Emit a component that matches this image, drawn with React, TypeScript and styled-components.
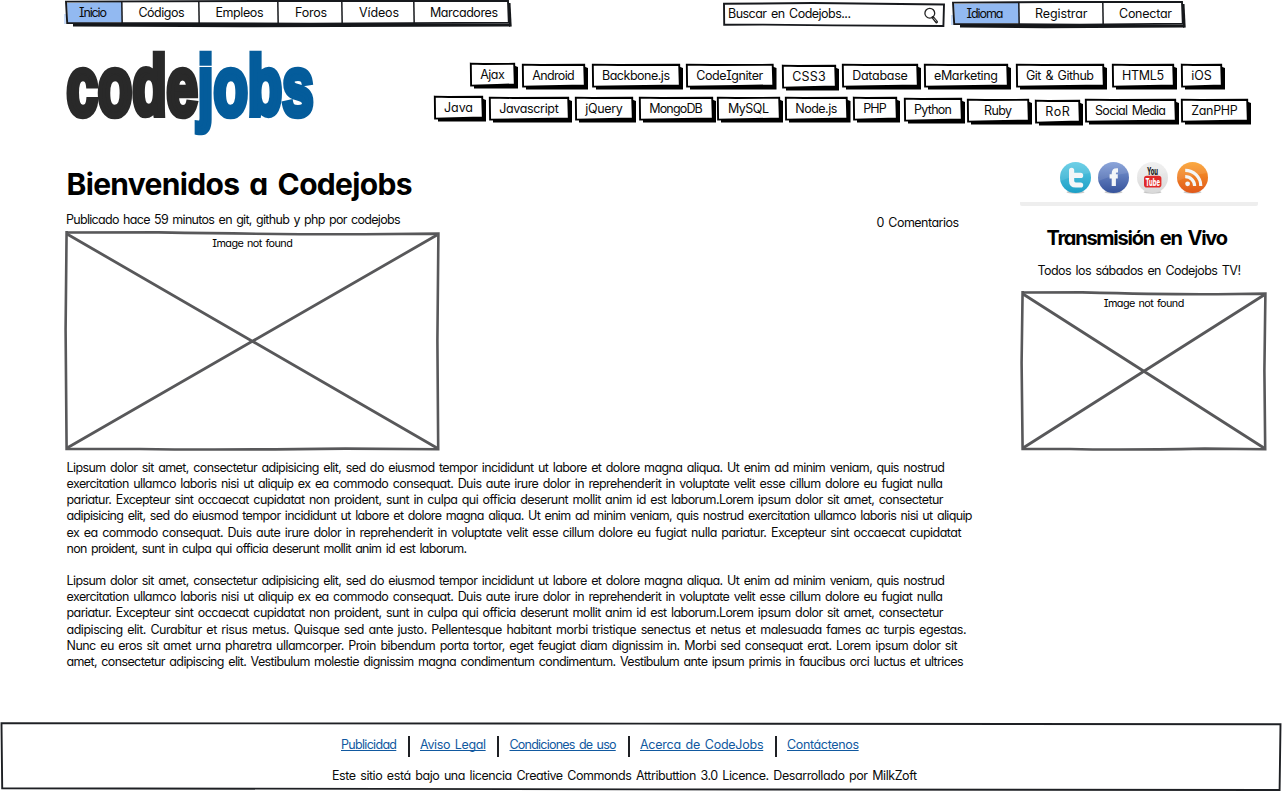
import React, { useLayoutEffect, useRef, useState } from "react";
import styled, { createGlobalStyle } from "styled-components";

const GlobalStyle = createGlobalStyle`
  * { box-sizing: border-box; }
  body {
    margin: 0;
    background: #fff;
    color: #0a0a0a;
    font-family: Inter, "Liberation Sans", sans-serif;
    font-feature-settings: "cv11", "cv08";
    font-size: 12.5px;
    line-height: 16px;
    overflow: hidden;
  }
  h1, h2, p { margin: 0; }
`;

const FitBox = styled.span<{ $w: number }>`
  display: inline-block;
  flex: none;
  width: ${(p) => p.$w}px;
  white-space: pre;
  word-spacing: 0.12em;
`;

/* One line of text, tracked so that it fills the given measure. */
function Fit({ w, children }: { w: number; children: string }) {
  const ref = useRef<HTMLSpanElement>(null);
  const [tracking, setTracking] = useState(0);
  useLayoutEffect(() => {
    if (!ref.current) return;
    const natural = ref.current.getBoundingClientRect().width;
    setTracking((w - natural) / (children.length - 1));
  }, [w, children]);
  return (
    <FitBox $w={w}>
      <span ref={ref} style={{ letterSpacing: tracking }}>{children}</span>
    </FitBox>
  );
}

const Page = styled.div`
  width: 1282px;
  height: 791px;
  display: flex;
  flex-direction: column;
  overflow: hidden;
`;

const Sketch = styled.svg`
  position: absolute;
  left: 0;
  top: 0;
  overflow: visible;
  pointer-events: none;
`;

/* ---------- top bar ---------- */

const TopBar = styled.div`
  display: flex;
  align-items: flex-start;
  height: 51px;
  padding-left: 65px;
`;

const MenuBox = styled.nav<{ $w: number; $ml?: number; $mt?: number }>`
  position: relative;
  display: flex;
  flex: none;
  width: ${(p) => p.$w}px;
  height: 28px;
  margin-left: ${(p) => p.$ml ?? 0}px;
  margin-top: ${(p) => p.$mt ?? 0}px;
`;

const MenuItem = styled.a<{ $w: number; $pad: number }>`
  position: relative;
  flex: none;
  width: ${(p) => p.$w}px;
  padding: 5px 0 0 ${(p) => p.$pad}px;
`;

type Item = { label: string; w: number; pad: number; text: number };

function Menu({ items, ml, mt }: { items: Item[]; ml?: number; mt?: number }) {
  const total = items.reduce((s, i) => s + i.w, 0);
  const edges: number[] = [];
  items.reduce((s, i) => { edges.push(s + i.w); return s + i.w; }, 0);
  const first = items[0].w;
  return (
    <MenuBox $w={total} $ml={ml} $mt={mt}>
      <Sketch width={total + 4} height={28}>
        <path d={`M2 3 L${first} 2 V22 L3 23Z`} fill="#92b9f1" />
        <path d="M0 14V24" stroke="#92b9f1" strokeWidth="1" />
        <path d={`M8 25 L${total * 0.4} 25.6 L${total} 25`} stroke="#15171a" strokeWidth="3.2" fill="none" />
        <path d={`M${total - 0.8} 3 L${total + 0.4} 26.6`} stroke="#15171a" strokeWidth="2.6" fill="none" />
        <path
          d={`M1 1.6 L${total * 0.45} 1 L${total - 2} 1 L${total - 1.2} 22.6 L${total * 0.55} 23.6 L2.2 23 Z`}
          stroke="#17191d" strokeWidth="1.9" fill="none"
        />
        {edges.slice(0, -1).map((x) => (
          <path key={x} d={`M${x - 0.2} 1 L${x + 0.2} 26`} stroke="#17191d" strokeWidth="1.5" />
        ))}
      </Sketch>
      {items.map((i) => (
        <MenuItem key={i.label} $w={i.w} $pad={i.pad}><Fit w={i.text}>{i.label}</Fit></MenuItem>
      ))}
    </MenuBox>
  );
}

const SearchBox = styled.div`
  position: relative;
  display: flex;
  justify-content: space-between;
  flex: none;
  width: 222px;
  height: 24px;
  margin: 3px 0 0 213px;
  padding: 3px 6px 0 5px;
`;

const SearchText = styled.span`
  position: relative;
`;

const Lens = styled.svg`
  position: relative;
  flex: none;
  margin-top: 1px;
`;

/* ---------- header ---------- */

const Header = styled.header`
  display: flex;
  height: 110px;
  padding-left: 65px;
`;

const Logo = styled.svg`
  flex: none;
  width: 250px;
  height: 78px;
  overflow: visible;
  font-family: "Liberation Sans", Arial, sans-serif;
  font-feature-settings: normal;
  font-size: 84px;
  font-weight: 700;
`;

const TagCloud = styled.div`
  display: grid;
  grid-template-rows: 33px 33px;
  width: 900px;
  margin: 12px 0 0 119px;
  align-items: start;
`;

const TagRow = styled.div<{ $pad: number }>`
  display: flex;
  align-items: flex-start;
  padding-left: ${(p) => p.$pad}px;
`;

const TagBox = styled.a<{ $w: number; $gap: number; $drop: number }>`
  position: relative;
  display: flex;
  flex: none;
  justify-content: center;
  width: ${(p) => p.$w}px;
  height: 25px;
  margin-left: ${(p) => p.$gap}px;
  margin-top: ${(p) => p.$drop}px;
  padding: 4px 3px 0 0;
`;

const TagText = styled.span`
  position: relative;
`;

type TagData = [label: string, left: number, right: number, top: number, text: number];

const row1: TagData[] = [
  ["Ajax", 470, 518, 0, 24.5], ["Android", 522, 588, 1, 42.5], ["Backbone.js", 592, 683, 1, 68],
  ["CodeIgniter", 686, 776.5, 1, 67], ["CSS3", 782, 839, 2, 33.5], ["Database", 842, 921, 1, 55.5],
  ["eMarketing", 924, 1011, 1, 64], ["Git & Github", 1016, 1107, 1, 68], ["HTML5", 1112, 1177, 1, 42],
  ["iOS", 1181, 1225, 1, 20.5],
];
const row2: TagData[] = [
  ["Java", 434, 486, 0, 29], ["Javascript", 489, 572, 1, 59.5], ["jQuery", 575, 636, 1, 37.5],
  ["MongoDB", 639, 716, 1, 53.5], ["MySQL", 717, 783, 1, 41], ["Node.js", 785, 850.5, 1, 42],
  ["PHP", 853, 900, 1, 23.5], ["Python", 904, 965, 2, 38], ["Ruby", 967, 1032, 3, 28],
  ["RoR", 1035, 1083, 4, 24.5], ["Social Media", 1085, 1179, 3, 71], ["ZanPHP", 1181, 1251, 3, 46.5],
];

function Tag({ label, w, gap, drop, text }: { label: string; w: number; gap: number; drop: number; text: number }) {
  const r = w - 3;
  return (
    <TagBox $w={w} $gap={gap} $drop={drop}>
      <Sketch width={w} height={26}>
        <path d={`M4 22 V25.6 L${w * 0.5} 25.4 L${w} 25.4 L${w} 4 L${r - 1} 2.6 V22Z`} fill="#000" />
        <path
          d={`M0.8 0.6 L${r * 0.3} 1 L${r - 0.8} 0.8 L${r - 0.2} 21.4 L${r * 0.6} 22 L1.1 22.6 Z`}
          fill="#fff" stroke="#000" strokeWidth="1.9"
        />
      </Sketch>
      <TagText><Fit w={text}>{label}</Fit></TagText>
    </TagBox>
  );
}

function Tags({ data, origin }: { data: TagData[]; origin: number }) {
  return (
    <TagRow $pad={data[0][1] - origin}>
      {data.map(([label, left, right, top, text], i) => (
        <Tag key={label} label={label} w={right - left} gap={i ? left - data[i - 1][2] : 0} drop={top} text={text} />
      ))}
    </TagRow>
  );
}

/* ---------- content ---------- */

const Columns = styled.main`
  display: flex;
  height: 561px;
  padding-left: 66px;
`;

const Article = styled.article`
  flex: none;
  width: 954px;
`;

const Title = styled.h1`
  height: 46px;
  padding: 5px 0 0 0.5px;
  color: #000;
  font-size: 30px;
  line-height: 36px;
  font-weight: 700;
`;

const Meta = styled.div`
  display: flex;
  justify-content: space-between;
  width: 893px;
  height: 24px;
  padding-top: 5px;
`;

const Comments = styled.span`
  margin-top: 3px;
`;

const Picture = styled.figure<{ $w: number; $h: number }>`
  position: relative;
  display: flex;
  justify-content: center;
  width: ${(p) => p.$w}px;
  height: ${(p) => p.$h}px;
  margin: 0 0 0 -1px;
  padding: 5px 0 0 1px;
  font-size: 10.8px;
  line-height: 16px;
  color: #000;
`;

const Caption = styled.figcaption`
  position: relative;
`;

function MissingImage({ w, h }: { w: number; h: number }) {
  return (
    <Picture $w={w} $h={h}>
      <Sketch width={w} height={h} fill="none" stroke="#58585a" strokeWidth="2.8">
        <path d={`M1 1.5 L${w * 0.25} 1.4 Q${w * 0.6} 3.6 ${w * 0.8} 3.2 L${w - 0.6} 2.6 L${w - 1.6} ${h * 0.5} L${w - 0.8} ${h - 0.8} L${w * 0.75} ${h - 1.4} Q${w * 0.4} ${h + 0.2} ${w * 0.2} ${h - 1} L1.6 ${h - 1} L0.6 ${h * 0.45} L1.6 0`} strokeWidth="2.6" />
        <path d={`M2 3 L${w - 2} ${h - 2} M${w - 2} 4 L2 ${h - 2}`} />
      </Sketch>
      <Caption><Fit w={80.5}>Image not found</Fit></Caption>
    </Picture>
  );
}

const Prose = styled.div`
  display: grid;
  gap: 16.17px;
  padding: 10px 0 0 0.5px;
  line-height: 16.17px;
`;

const Line = styled.span`
  display: block;
  height: 16.17px;
`;

const paragraphs: [string, number][][] = [
  [
    ["Lipsum dolor sit amet, consectetur adipisicing elit, sed do eiusmod tempor incididunt ut labore et dolore magna aliqua. Ut enim ad minim veniam, quis nostrud", 878.5],
    ["exercitation ullamco laboris nisi ut aliquip ex ea commodo consequat. Duis aute irure dolor in reprehenderit in voluptate velit esse cillum dolore eu fugiat nulla", 876.5],
    ["pariatur. Excepteur sint occaecat cupidatat non proident, sunt in culpa qui officia deserunt mollit anim id est laborum.Lorem ipsum dolor sit amet, consectetur", 877],
    ["adipisicing elit, sed do eiusmod tempor incididunt ut labore et dolore magna aliqua. Ut enim ad minim veniam, quis nostrud exercitation ullamco laboris nisi ut aliquip", 906],
    ["ex ea commodo consequat. Duis aute irure dolor in reprehenderit in voluptate velit esse cillum dolore eu fugiat nulla pariatur. Excepteur sint occaecat cupidatat", 895],
    ["non proident, sunt in culpa qui officia deserunt mollit anim id est laborum.", 400.5],
  ],
  [
    ["Lipsum dolor sit amet, consectetur adipisicing elit, sed do eiusmod tempor incididunt ut labore et dolore magna aliqua. Ut enim ad minim veniam, quis nostrud", 878.5],
    ["exercitation ullamco laboris nisi ut aliquip ex ea commodo consequat. Duis aute irure dolor in reprehenderit in voluptate velit esse cillum dolore eu fugiat nulla", 876.5],
    ["pariatur. Excepteur sint occaecat cupidatat non proident, sunt in culpa qui officia deserunt mollit anim id est laborum.Lorem ipsum dolor sit amet, consectetur", 877],
    ["adipiscing elit. Curabitur et risus metus. Quisque sed ante justo. Pellentesque habitant morbi tristique senectus et netus et malesuada fames ac turpis egestas.", 900],
    ["Nunc eu eros sit amet urna pharetra ullamcorper. Proin bibendum porta tortor, eget feugiat diam dignissim in. Morbi sed consequat erat. Lorem ipsum dolor sit", 891],
    ["amet, consectetur adipiscing elit. Vestibulum molestie dignissim magna condimentum condimentum. Vestibulum ante ipsum primis in faucibus orci luctus et ultrices", 897],
  ],
];

const Aside = styled.aside`
  flex: none;
  width: 247px;
`;

const Social = styled.div`
  display: flex;
  height: 45px;
  padding-left: 38px;
  border-bottom: 4px solid #eee;
  width: 238px;
  border-radius: 2px;
`;

const AsideTitle = styled.h2`
  padding: 20px 0 0 26.5px;
  color: #000;
  font-size: 20px;
  line-height: 24px;
`;

const AsideText = styled.p`
  height: 41px;
  padding: 13px 0 0 17.5px;
`;

const AsidePicture = styled.div`
  padding-left: 2px;
`;

function SocialIcons() {
  return (
    <Social>
      <svg width="160" height="38" viewBox="0 0 160 38">
        <defs>
          <linearGradient id="tw" x2="0" y2="1"><stop offset="0" stopColor="#5ecbe4" /><stop offset="1" stopColor="#1c9fc6" /></linearGradient>
          <linearGradient id="fb" x2="0" y2="1"><stop offset="0" stopColor="#7f9bd6" /><stop offset="1" stopColor="#36539b" /></linearGradient>
          <linearGradient id="yt" x2="0" y2="1"><stop offset="0" stopColor="#f0f0f0" /><stop offset="1" stopColor="#d9d9d9" /></linearGradient>
          <linearGradient id="rs" x2="0" y2="1"><stop offset="0" stopColor="#fba02c" /><stop offset="1" stopColor="#e0581a" /></linearGradient>
        </defs>
        {[17.5, 55.5, 94.5, 134.5].map((x, i) => (
          <g key={x}>
            <ellipse cx={x} cy="31.2" rx="9" ry="1.6" fill="#000" opacity=".22" />
            <circle cx={x} cy="16.5" r="15.5" fill={`url(#${["tw", "fb", "yt", "rs"][i]})`} />
            <path d={`M${x - 15} 20 A15.5 15.5 0 1 1 ${x + 15} 12 Q${x + 2} 13 ${x - 15} 20`} fill="#fff" opacity=".1" />
          </g>
        ))}
        <g fill="none" stroke="#f3f6f8" strokeLinecap="round" strokeLinejoin="round">
          <path d="M13.6 9.3V19.8Q13.6 24 17.8 24H22.6M13.6 14.4H22.6" strokeWidth="5.2" />
          <path d="M60 9.3H58.6Q55.8 9.3 55.8 12.5V25M51.6 15.4H59.8" strokeWidth="4.2" strokeLinecap="butt" />
          <path d="M127.2 15.6A9.4 9.4 0 0 1 136.6 25M127.2 9.4A15.6 15.6 0 0 1 142.8 25" strokeWidth="3.2" strokeLinecap="butt" />
        </g>
        <circle cx="129.6" cy="22.8" r="2.4" fill="#f3f6f8" />
        <text x="89" y="14" fontSize="10" fontWeight="800" fill="#222" textLength="11" lengthAdjust="spacingAndGlyphs">You</text>
        <rect x="86" y="14.8" width="17.4" height="11.8" rx="2.8" fill="#e02a2a" />
        <text x="87.6" y="24.6" fontSize="10.5" fontWeight="800" fill="#fff" textLength="14.4" lengthAdjust="spacingAndGlyphs">Tube</text>
      </svg>
    </Social>
  );
}

/* ---------- footer ---------- */

const Footer = styled.footer`
  position: relative;
  flex: none;
  width: 1282px;
  height: 69px;
`;

const FooterLinks = styled.div`
  display: flex;
  height: 46px;
  padding: 14px 0 0 341px;
`;

const FooterLink = styled.a`
  flex: none;
  padding-top: 1px;
  color: #1159a0;

  & span span {
    text-decoration: underline;
    text-decoration-thickness: 1px;
    text-underline-offset: 1px;
    text-decoration-skip-ink: none;
  }
`;

const Divider = styled.i<{ $l: number; $r: number }>`
  flex: none;
  width: 2px;
  height: 21px;
  margin: 0 ${(p) => p.$r}px 0 ${(p) => p.$l}px;
  background: #1e2024;
`;

const Legal = styled.p`
  padding-left: 332px;
`;

export default function App() {
  return (
    <Page>
      <GlobalStyle />
      <TopBar>
        <Menu
          items={[
            { label: "Inicio", w: 57, pad: 14, text: 28 },
            { label: "Códigos", w: 77, pad: 16.5, text: 46 },
            { label: "Empleos", w: 79, pad: 16.5, text: 48 },
            { label: "Foros", w: 64, pad: 17, text: 32 },
            { label: "Vídeos", w: 72, pad: 17, text: 40 },
            { label: "Marcadores", w: 96, pad: 16, text: 68 },
          ]}
        />
        <SearchBox>
          <Sketch width={222} height={24}>
            <path d="M1 0.8 L90 0 L221 1.5 L220.4 23 L110 22.4 L40 21.6 L1.2 21.8 Z" fill="none" stroke="#17191d" strokeWidth="1.9" />
          </Sketch>
          <SearchText><Fit w={123}>Buscar en Codejobs...</Fit></SearchText>
          <Lens width="15" height="17" viewBox="0 0 15 17">
            <circle cx="5.8" cy="6.2" r="4.9" fill="#fff" stroke="#222" strokeWidth="1.3" />
            <path d="M8.8 10.4L12.6 15" stroke="#222" strokeWidth="2.8" strokeLinecap="round" />
            <path d="M9.6 11.2L12.4 14.4" stroke="#ddd" strokeWidth=".8" />
          </Lens>
        </SearchBox>
        <Menu
          ml={7}
          mt={1}
          items={[
            { label: "Idioma", w: 67, pad: 14.5, text: 37 },
            { label: "Registrar", w: 84, pad: 16, text: 52.5 },
            { label: "Conectar", w: 81, pad: 16, text: 53 },
          ]}
        />
      </TopBar>
      <Header>
        <Logo viewBox="0 0 250 78" strokeWidth="6.6">
          <text x="1.5" y="63.6" textLength="247" lengthAdjust="spacingAndGlyphs">
            <tspan fill="#292929" stroke="#292929">code</tspan>
            <tspan fill="#045c9b" stroke="#045c9b">jobs</tspan>
          </text>
        </Logo>
        <TagCloud>
          <Tags data={row1} origin={434} />
          <Tags data={row2} origin={434} />
        </TagCloud>
      </Header>
      <Columns>
        <Article>
          <Title><Fit w={346}>Bienvenidos a Codejobs</Fit></Title>
          <Meta>
            <Fit w={334.5}>Publicado hace 59 minutos en git, github y php por codejobs</Fit>
            <Comments><Fit w={82.5}>0 Comentarios</Fit></Comments>
          </Meta>
          <MissingImage w={374} h={219} />
          <Prose>
            {paragraphs.map((lines, i) => (
              <p key={i}>
                {lines.map(([text, w]) => <Line key={text}><Fit w={w}>{text}</Fit></Line>)}
              </p>
            ))}
          </Prose>
        </Article>
        <Aside>
          <SocialIcons />
          <AsideTitle><Fit w={181.5}>Transmisión en Vivo</Fit></AsideTitle>
          <AsideText><Fit w={203.5}>Todos los sábados en Codejobs TV!</Fit></AsideText>
          <AsidePicture><MissingImage w={245} h={159} /></AsidePicture>
        </Aside>
      </Columns>
      <Footer>
        <Sketch width={1282} height={69}>
          <path d="M1.5 1.2 L640 1.6 L1280.5 2.2 L1279.6 68 L640 67.4 L2.2 66.2 Z" fill="none" stroke="#1e2024" strokeWidth="1.9" />
        </Sketch>
        <FooterLinks>
          <FooterLink><Fit w={56}>Publicidad</Fit></FooterLink>
          <Divider $l={11} $r={10} />
          <FooterLink><Fit w={66}>Aviso Legal</Fit></FooterLink>
          <Divider $l={11} $r={10.5} />
          <FooterLink><Fit w={107}>Condiciones de uso</Fit></FooterLink>
          <Divider $l={11} $r={10.5} />
          <FooterLink><Fit w={123.5}>Acerca de CodeJobs</Fit></FooterLink>
          <Divider $l={11} $r={10.5} />
          <FooterLink><Fit w={72}>Contáctenos</Fit></FooterLink>
        </FooterLinks>
        <Legal><Fit w={585}>Este sitio está bajo una licencia Creative Commonds Attributtion 3.0 Licence. Desarrollado por MilkZoft</Fit></Legal>
      </Footer>
    </Page>
  );
}
